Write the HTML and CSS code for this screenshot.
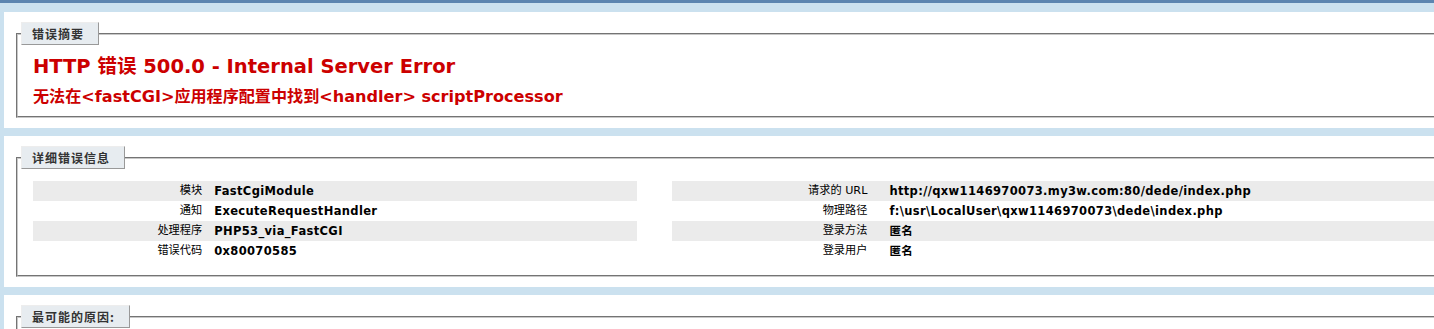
FILE: index.html
```html
<!DOCTYPE html>
<html lang="zh-CN">
<head>
<meta charset="utf-8">
<title>IIS 详细错误 - 500.0 - Internal Server Error</title>
<link rel="stylesheet" href="styles.css">
</head>
<body>
<div class="header"></div>
<div class="content">
  <div class="container summary">
    <fieldset class="box">
      <legend class="legend">错误摘要</legend>
      <h2 class="title">HTTP 错误 500.0 - Internal Server Error</h2>
      <h3 class="subtitle">无法在&lt;fastCGI&gt;应用程序配置中找到&lt;handler&gt; scriptProcessor</h3>
    </fieldset>
  </div>
  <div class="container">
    <fieldset class="box">
      <legend class="legend">详细错误信息</legend>
      <div class="details">
        <table class="info info-left">
          <tr class="alt"><th>模块</th><td>FastCgiModule</td></tr>
          <tr><th>通知</th><td>ExecuteRequestHandler</td></tr>
          <tr class="alt"><th>处理程序</th><td>PHP53_via_FastCGI</td></tr>
          <tr><th>错误代码</th><td>0x80070585</td></tr>
        </table>
        <table class="info info-right">
          <tr class="alt"><th>请求的 URL</th><td>http://qxw1146970073.my3w.com:80/dede/index.php</td></tr>
          <tr><th>物理路径</th><td>f:\usr\LocalUser\qxw1146970073\dede\index.php</td></tr>
          <tr class="alt"><th>登录方法</th><td>匿名</td></tr>
          <tr><th>登录用户</th><td>匿名</td></tr>
        </table>
      </div>
    </fieldset>
  </div>
  <div class="container">
    <fieldset class="box">
      <legend class="legend">最可能的原因:</legend>
      <ul class="causes">
        <li>IIS 无法访问网站或应用程序的 web.config 文件。</li>
      </ul>
    </fieldset>
  </div>
</div>
</body>
</html>
```

FILE: styles.css
```css
html, body {
  margin: 0;
  padding: 0;
}
body {
  background: #CBE1EF;
  font-family: "DejaVu Sans", Verdana, "Noto Sans CJK SC", sans-serif;
  font-size: 11.2px;
  color: #000;
  overflow: hidden;
  width: 1434px;
  height: 329px;
}
.header {
  height: 3px;
  background: #5C85B0;
}
.content {
  padding-left: 4px;
  width: 1900px;
}
.container {
  background: #fff;
  width: 1764px;
  padding: 10px;
  margin-top: 8px;
}
.summary {
  margin-top: 9px;
}
.box {
  margin: 0 2px;
  padding: 0 15px 10px 15px;
  border: 2px groove #c8c8c8;
  min-width: 0;
}
.legend {
  color: #333333;
  font-weight: bold;
  font-size: 12px;
  line-height: 13px;
  letter-spacing: 1px;
  padding: 4px 14px 4px 10px;
  margin-left: -12px;
  border-top: 1px solid #EDEDED;
  border-left: 1px solid #EDEDED;
  border-right: 1px solid #999999;
  border-bottom: 1px solid #999999;
  background: #E7ECF0;
  font-family: "Noto Sans CJK SC", "DejaVu Sans", sans-serif;
}
.title {
  margin: 10px 0 0 0;
  font-size: 19.5px;
  line-height: 23px;
  color: #CC0000;
  font-weight: bold;
}
.subtitle {
  margin: 9px 0 0 0;
  font-size: 16.1px;
  line-height: 19px;
  color: #CC0000;
  font-weight: bold;
}
.details {
  display: grid;
  grid-template-columns: 604px 1087px;
  column-gap: 35px;
  margin-top: 12px;
}
.info {
  width: 100%;
  border-collapse: collapse;
  border: none;
  margin-bottom: 4px;
}
.info th,
.info td {
  vertical-align: top;
  padding: 3px 0;
  line-height: 14px;
  text-align: left;
  font-weight: bold;
  white-space: nowrap;
}
.info td {
  font-size: 11.5px;
  letter-spacing: 0.35px;
}
.info th {
  box-sizing: border-box;
  text-align: right;
  font-weight: normal;
}
.info-left th {
  width: 30%;
  padding-right: 12px;
}
.info-right th {
  width: 20%;
  padding-right: 22px;
}
.info tr.alt th,
.info tr.alt td {
  background: #EBEBEB;
}
.causes {
  margin: 10px 0 10px 40px;
  padding: 0;
}
```
